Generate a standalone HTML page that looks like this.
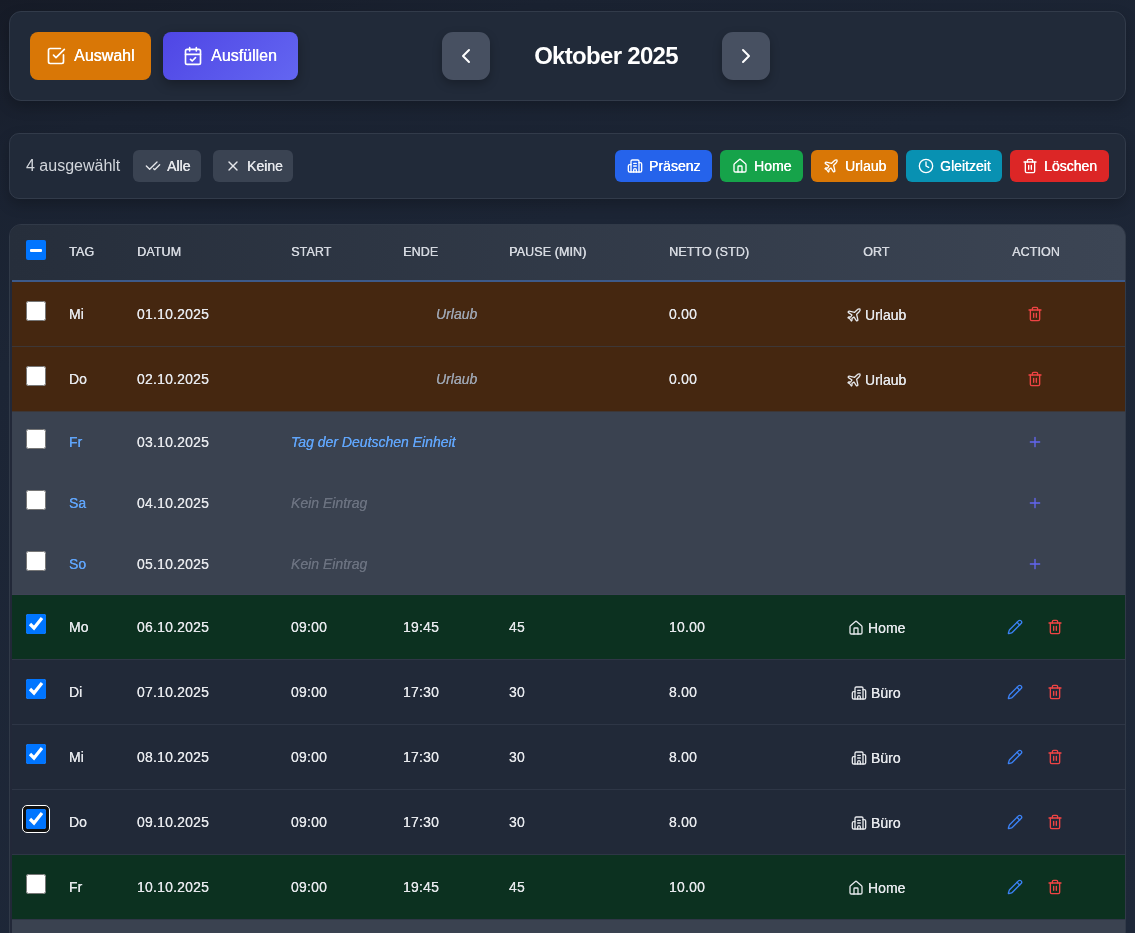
<!DOCTYPE html>
<html><head><meta charset="utf-8">
<style>
*{box-sizing:border-box;margin:0;padding:0}
html,body{width:1135px;height:933px;overflow:hidden}
body{font-family:"Liberation Sans",sans-serif;background:linear-gradient(165deg,#161b27 0%,#1a2231 12%,#1c2535 30%,#1e2839 100%);color:#e5e7eb;position:relative}
.card{position:absolute;will-change:transform;border:1px solid #323b4a;background:#212a39;border-radius:12px;box-shadow:0 6px 14px rgba(0,0,0,.22)}
.btn{position:absolute;display:flex;align-items:center;color:#fff;white-space:nowrap;text-shadow:0.35px 0 0 currentColor}
.btn svg{fill:none;stroke:currentColor;stroke-width:2;stroke-linecap:round;stroke-linejoin:round;flex:none}
.b1{left:20px;top:20px;width:121px;height:48px;border-radius:8px;background:#d97706;font-size:16px;padding-left:16px}
.b1 svg{width:20px;height:20px;margin-right:8px}
.b2{left:153px;top:20px;width:135px;height:48px;border-radius:8px;background:linear-gradient(135deg,#4f46e5,#6366f1);font-size:16px;padding-left:20px;box-shadow:0 4px 12px rgba(0,0,0,.3)}
.b2 svg{width:20px;height:20px;margin-right:8px}
.nav{position:absolute;top:20px;width:48px;height:48px;border-radius:11px;background:#475061;display:flex;align-items:center;justify-content:center;box-shadow:0 4px 10px rgba(0,0,0,.25)}
.nav svg{width:24px;height:24px;fill:none;stroke:#fff;stroke-width:2;stroke-linecap:round;stroke-linejoin:round}
.month{position:absolute;left:462px;top:20px;width:268px;height:48px;line-height:48px;text-align:center;font-size:24px;font-weight:bold;color:#fff;letter-spacing:-0.7px}
.sel{position:absolute;left:16px;top:16px;height:32px;line-height:32px;font-size:16px;color:#d1d5db}
.sb{position:absolute;top:16px;height:32px;border-radius:6px;font-size:14px;color:#e5e7eb;background:#3a4352;display:flex;align-items:center;padding-left:12px}
.sb svg{width:16px;height:16px;margin-right:6px}
.cb{top:16px;height:32px;border-radius:6px;font-size:14px;padding-left:12px}
.cb svg{width:16px;height:16px;margin-right:6px}
.tbl{position:absolute;will-change:transform;left:9px;top:224px;width:1117px;height:720px;border:1px solid #313a48;border-radius:12px;background:#222838;overflow:hidden}
.th{position:absolute;left:0;top:0;width:100%;height:55px;background:linear-gradient(90deg,#262e3b,#3c4554)}
.thl{position:absolute;left:2px;top:55px;width:1113px;height:2px;background:#3d5a8a}
.hc{position:absolute;top:0;line-height:55px;font-size:12.5px;font-weight:normal;color:#d5d9e0;letter-spacing:0.1px;text-shadow:0.4px 0 0 #d5d9e0}
.row{position:absolute;left:2px;width:1113px;border-bottom:1px solid rgba(55,65,81,.6)}
.c{position:absolute;font-size:14px;color:#e5e7eb;white-space:nowrap;text-shadow:0.1px 0 0 currentColor}
input[type=checkbox]{position:absolute;width:20px;height:20px;margin:0}
.it{font-style:italic}
.n{letter-spacing:0.2px}
.ind{position:absolute;width:20px;height:20px;background:#0075ff;border-radius:2px}
.ind:after{content:"";position:absolute;left:4px;top:8.5px;width:12px;height:3px;background:#fff;border-radius:1px}
.ic{position:absolute;fill:none;stroke:currentColor;stroke-width:2;stroke-linecap:round;stroke-linejoin:round}
</style></head><body>

<div class="card" style="left:9px;top:11px;width:1117px;height:90px">
  <div class="btn b1"><svg viewBox="0 0 24 24"><path d="m9 11 3 3L22 4"/><path d="M21 10.656V19a2 2 0 0 1-2 2H5a2 2 0 0 1-2-2V5a2 2 0 0 1 2-2h12.344"/></svg>Auswahl</div>
  <div class="btn b2"><svg viewBox="0 0 24 24"><rect x="3" y="4" width="18" height="18" rx="2"/><path d="M16 2v4M8 2v4M3 10h18"/><path d="m9 16 2 2 4-4"/></svg>Ausfüllen</div>
  <div class="nav" style="left:432px"><svg viewBox="0 0 24 24"><path d="m15 18-6-6 6-6"/></svg></div>
  <div class="month">Oktober 2025</div>
  <div class="nav" style="left:712px"><svg viewBox="0 0 24 24"><path d="m9 18 6-6-6-6"/></svg></div>
</div>

<div class="card" style="left:9px;top:133px;width:1117px;height:66px;border-radius:10px">
  <div class="sel">4 ausgewählt</div>
  <div class="btn sb" style="left:123px;width:68px"><svg viewBox="0 0 24 24"><path d="M18 6 7 17l-5-5"/><path d="m22 10-7.5 7.5L13 16"/></svg>Alle</div>
  <div class="btn sb" style="left:203px;width:80px"><svg viewBox="0 0 24 24"><path d="M18 6 6 18"/><path d="m6 6 12 12"/></svg>Keine</div>
  <div class="btn cb" style="left:605px;width:97px;background:#2563eb"><svg viewBox="0 0 24 24"><path d="M10 12h4"/><path d="M10 8h4"/><path d="M14 21v-3a2 2 0 0 0-4 0v3"/><path d="M6 10H4a2 2 0 0 0-2 2v7a2 2 0 0 0 2 2h16a2 2 0 0 0 2-2V9a2 2 0 0 0-2-2h-2"/><path d="M6 21V5a2 2 0 0 1 2-2h8a2 2 0 0 1 2 2v16"/></svg>Präsenz</div>
  <div class="btn cb" style="left:710px;width:83px;background:#16a34a"><svg viewBox="0 0 24 24"><path d="M15 21v-8a1 1 0 0 0-1-1h-4a1 1 0 0 0-1 1v8"/><path d="M3 10a2 2 0 0 1 .709-1.528l7-5.999a2 2 0 0 1 2.582 0l7 5.999A2 2 0 0 1 21 10v9a2 2 0 0 1-2 2H5a2 2 0 0 1-2-2z"/></svg>Home</div>
  <div class="btn cb" style="left:801px;width:87px;background:#d97706"><svg viewBox="0 0 24 24"><path d="M17.8 19.2 16 11l3.5-3.5C21 6 21.5 4 21 3c-1-.5-3 0-4.5 1.5L13 8 4.8 6.2c-.5-.1-.9.1-1.1.5l-.3.5c-.2.5-.1 1 .3 1.3L9 12l-2 3H4l-1 1 3 2 2 3 1-1v-3l3-2 3.5 5.3c.3.4.8.5 1.3.3l.5-.2c.4-.3.6-.7.5-1.2z"/></svg>Urlaub</div>
  <div class="btn cb" style="left:896px;width:96px;background:#0891b2"><svg viewBox="0 0 24 24"><circle cx="12" cy="12" r="10"/><path d="M12 6v6l4 2"/></svg>Gleitzeit</div>
  <div class="btn cb" style="left:1000px;width:99px;background:#dc2626"><svg viewBox="0 0 24 24"><path d="M3 6h18"/><path d="M19 6v14c0 1-1 2-2 2H7c-1 0-2-1-2-2V6"/><path d="M8 6V4c0-1 1-2 2-2h4c1 0 2 1 2 2v2"/><path d="M10 11v6M14 11v6"/></svg>Löschen</div>
</div>

<div class="tbl">
  <div class="th">
    <div class="ind" style="left:16px;top:15px"></div>
    <div class="hc" style="left:59px">TAG</div>
    <div class="hc" style="left:127px">DATUM</div>
    <div class="hc" style="left:281px">START</div>
    <div class="hc" style="left:393px">ENDE</div>
    <div class="hc" style="left:499px">PAUSE (MIN)</div>
    <div class="hc" style="left:659px">NETTO (STD)</div>
    <div class="hc" style="left:853px">ORT</div>
    <div class="hc" style="left:1002px">ACTION</div>
  </div>
  <div class="thl"></div>
<div class="row" style="top:57px;height:65px;background:#452710;border-bottom-color:#3d3737"><input type="checkbox" style="left:14px;top:19px"><div class="c" style="left:57px;top:24px;color:#e5e7eb">Mi</div><div class="c n" style="left:125px;top:24px">01.10.2025</div><div class="c it" style="left:424px;top:24px;color:#9ca3af">Urlaub</div><div class="c n" style="left:657px;top:24px">0.00</div><svg class="ic" viewBox="0 0 24 24" style="left:834px;top:25px;width:16px;height:16px;color:#e5e7eb;stroke-width:2"><path d="M17.8 19.2 16 11l3.5-3.5C21 6 21.5 4 21 3c-1-.5-3 0-4.5 1.5L13 8 4.8 6.2c-.5-.1-.9.1-1.1.5l-.3.5c-.2.5-.1 1 .3 1.3L9 12l-2 3H4l-1 1 3 2 2 3 1-1v-3l3-2 3.5 5.3c.3.4.8.5 1.3.3l.5-.2c.4-.3.6-.7.5-1.2z"/></svg><div class="c" style="left:853px;top:25px">Urlaub</div><svg class="ic" viewBox="0 0 24 24" style="left:1015px;top:24px;width:16px;height:16px;color:#ef4444;stroke-width:2"><path d="M3 6h18"/><path d="M19 6v14c0 1-1 2-2 2H7c-1 0-2-1-2-2V6"/><path d="M8 6V4c0-1 1-2 2-2h4c1 0 2 1 2 2v2"/><path d="M10 11v6M14 11v6"/></svg></div>
<div class="row" style="top:122px;height:65px;background:#452710;border-bottom-color:#3d3737"><input type="checkbox" style="left:14px;top:19px"><div class="c" style="left:57px;top:24px;color:#e5e7eb">Do</div><div class="c n" style="left:125px;top:24px">02.10.2025</div><div class="c it" style="left:424px;top:24px;color:#9ca3af">Urlaub</div><div class="c n" style="left:657px;top:24px">0.00</div><svg class="ic" viewBox="0 0 24 24" style="left:834px;top:25px;width:16px;height:16px;color:#e5e7eb;stroke-width:2"><path d="M17.8 19.2 16 11l3.5-3.5C21 6 21.5 4 21 3c-1-.5-3 0-4.5 1.5L13 8 4.8 6.2c-.5-.1-.9.1-1.1.5l-.3.5c-.2.5-.1 1 .3 1.3L9 12l-2 3H4l-1 1 3 2 2 3 1-1v-3l3-2 3.5 5.3c.3.4.8.5 1.3.3l.5-.2c.4-.3.6-.7.5-1.2z"/></svg><div class="c" style="left:853px;top:25px">Urlaub</div><svg class="ic" viewBox="0 0 24 24" style="left:1015px;top:24px;width:16px;height:16px;color:#ef4444;stroke-width:2"><path d="M3 6h18"/><path d="M19 6v14c0 1-1 2-2 2H7c-1 0-2-1-2-2V6"/><path d="M8 6V4c0-1 1-2 2-2h4c1 0 2 1 2 2v2"/><path d="M10 11v6M14 11v6"/></svg></div>
<div class="row" style="top:187px;height:61px;background:#3a4250;border-bottom-color:#3a4250"><input type="checkbox" style="left:14px;top:17px"><div class="c" style="left:57px;top:22px;color:#60a5fa">Fr</div><div class="c n" style="left:125px;top:22px">03.10.2025</div><div class="c it" style="left:279px;top:22px;color:#60a5fa">Tag der Deutschen Einheit</div><svg class="ic" viewBox="0 0 24 24" style="left:1015px;top:22px;width:16px;height:16px;color:#6366f1;stroke-width:2"><path d="M5 12h14M12 5v14"/></svg></div>
<div class="row" style="top:248px;height:61px;background:#3a4250;border-bottom-color:#3a4250"><input type="checkbox" style="left:14px;top:17px"><div class="c" style="left:57px;top:22px;color:#60a5fa">Sa</div><div class="c n" style="left:125px;top:22px">04.10.2025</div><div class="c it" style="left:279px;top:22px;color:#6b7280">Kein Eintrag</div><svg class="ic" viewBox="0 0 24 24" style="left:1015px;top:22px;width:16px;height:16px;color:#6366f1;stroke-width:2"><path d="M5 12h14M12 5v14"/></svg></div>
<div class="row" style="top:309px;height:61px;background:#3a4250;border-bottom-color:#3e4255"><input type="checkbox" style="left:14px;top:17px"><div class="c" style="left:57px;top:22px;color:#60a5fa">So</div><div class="c n" style="left:125px;top:22px">05.10.2025</div><div class="c it" style="left:279px;top:22px;color:#6b7280">Kein Eintrag</div><svg class="ic" viewBox="0 0 24 24" style="left:1015px;top:22px;width:16px;height:16px;color:#6366f1;stroke-width:2"><path d="M5 12h14M12 5v14"/></svg></div>
<div class="row" style="top:370px;height:65px;background:#0c3120;border-bottom-color:#303647"><input type="checkbox" checked style="left:14px;top:19px"><div class="c" style="left:57px;top:24px;color:#e5e7eb">Mo</div><div class="c n" style="left:125px;top:24px">06.10.2025</div><div class="c n" style="left:279px;top:24px">09:00</div><div class="c n" style="left:391px;top:24px">19:45</div><div class="c n" style="left:497px;top:24px">45</div><div class="c n" style="left:657px;top:24px">10.00</div><svg class="ic" viewBox="0 0 24 24" style="left:836px;top:25px;width:16px;height:16px;color:#e5e7eb;stroke-width:2"><path d="M15 21v-8a1 1 0 0 0-1-1h-4a1 1 0 0 0-1 1v8"/><path d="M3 10a2 2 0 0 1 .709-1.528l7-5.999a2 2 0 0 1 2.582 0l7 5.999A2 2 0 0 1 21 10v9a2 2 0 0 1-2 2H5a2 2 0 0 1-2-2z"/></svg><div class="c" style="left:856px;top:25px">Home</div><svg class="ic" viewBox="0 0 24 24" style="left:995px;top:24px;width:16px;height:16px;color:#3b82f6;stroke-width:2"><path d="M21.174 6.812a1 1 0 0 0-3.986-3.987L3.842 16.174a2 2 0 0 0-.5.83l-1.321 4.352a.5.5 0 0 0 .623.622l4.353-1.32a2 2 0 0 0 .83-.497z"/><path d="m15 5 4 4"/></svg><svg class="ic" viewBox="0 0 24 24" style="left:1035px;top:24px;width:16px;height:16px;color:#ef4444;stroke-width:2"><path d="M3 6h18"/><path d="M19 6v14c0 1-1 2-2 2H7c-1 0-2-1-2-2V6"/><path d="M8 6V4c0-1 1-2 2-2h4c1 0 2 1 2 2v2"/><path d="M10 11v6M14 11v6"/></svg></div>
<div class="row" style="top:435px;height:65px;background:#212938;border-bottom-color:#2e3646"><input type="checkbox" checked style="left:14px;top:19px"><div class="c" style="left:57px;top:24px;color:#e5e7eb">Di</div><div class="c n" style="left:125px;top:24px">07.10.2025</div><div class="c n" style="left:279px;top:24px">09:00</div><div class="c n" style="left:391px;top:24px">17:30</div><div class="c n" style="left:497px;top:24px">30</div><div class="c n" style="left:657px;top:24px">8.00</div><svg class="ic" viewBox="0 0 24 24" style="left:839px;top:25px;width:16px;height:16px;color:#e5e7eb;stroke-width:2"><path d="M10 12h4"/><path d="M10 8h4"/><path d="M14 21v-3a2 2 0 0 0-4 0v3"/><path d="M6 10H4a2 2 0 0 0-2 2v7a2 2 0 0 0 2 2h16a2 2 0 0 0 2-2V9a2 2 0 0 0-2-2h-2"/><path d="M6 21V5a2 2 0 0 1 2-2h8a2 2 0 0 1 2 2v16"/></svg><div class="c" style="left:859px;top:25px">Büro</div><svg class="ic" viewBox="0 0 24 24" style="left:995px;top:24px;width:16px;height:16px;color:#3b82f6;stroke-width:2"><path d="M21.174 6.812a1 1 0 0 0-3.986-3.987L3.842 16.174a2 2 0 0 0-.5.83l-1.321 4.352a.5.5 0 0 0 .623.622l4.353-1.32a2 2 0 0 0 .83-.497z"/><path d="m15 5 4 4"/></svg><svg class="ic" viewBox="0 0 24 24" style="left:1035px;top:24px;width:16px;height:16px;color:#ef4444;stroke-width:2"><path d="M3 6h18"/><path d="M19 6v14c0 1-1 2-2 2H7c-1 0-2-1-2-2V6"/><path d="M8 6V4c0-1 1-2 2-2h4c1 0 2 1 2 2v2"/><path d="M10 11v6M14 11v6"/></svg></div>
<div class="row" style="top:500px;height:65px;background:#212938;border-bottom-color:#2e3646"><input type="checkbox" checked style="left:14px;top:19px"><div class="c" style="left:57px;top:24px;color:#e5e7eb">Mi</div><div class="c n" style="left:125px;top:24px">08.10.2025</div><div class="c n" style="left:279px;top:24px">09:00</div><div class="c n" style="left:391px;top:24px">17:30</div><div class="c n" style="left:497px;top:24px">30</div><div class="c n" style="left:657px;top:24px">8.00</div><svg class="ic" viewBox="0 0 24 24" style="left:839px;top:25px;width:16px;height:16px;color:#e5e7eb;stroke-width:2"><path d="M10 12h4"/><path d="M10 8h4"/><path d="M14 21v-3a2 2 0 0 0-4 0v3"/><path d="M6 10H4a2 2 0 0 0-2 2v7a2 2 0 0 0 2 2h16a2 2 0 0 0 2-2V9a2 2 0 0 0-2-2h-2"/><path d="M6 21V5a2 2 0 0 1 2-2h8a2 2 0 0 1 2 2v16"/></svg><div class="c" style="left:859px;top:25px">Büro</div><svg class="ic" viewBox="0 0 24 24" style="left:995px;top:24px;width:16px;height:16px;color:#3b82f6;stroke-width:2"><path d="M21.174 6.812a1 1 0 0 0-3.986-3.987L3.842 16.174a2 2 0 0 0-.5.83l-1.321 4.352a.5.5 0 0 0 .623.622l4.353-1.32a2 2 0 0 0 .83-.497z"/><path d="m15 5 4 4"/></svg><svg class="ic" viewBox="0 0 24 24" style="left:1035px;top:24px;width:16px;height:16px;color:#ef4444;stroke-width:2"><path d="M3 6h18"/><path d="M19 6v14c0 1-1 2-2 2H7c-1 0-2-1-2-2V6"/><path d="M8 6V4c0-1 1-2 2-2h4c1 0 2 1 2 2v2"/><path d="M10 11v6M14 11v6"/></svg></div>
<div class="row" style="top:565px;height:65px;background:#212938;border-bottom-color:#2e3646"><div style="position:absolute;left:10px;top:15px;width:28px;height:28px;border:1px solid #fff;background:#101010;border-radius:5px"></div><input type="checkbox" checked style="left:14px;top:19px"><div class="c" style="left:57px;top:24px;color:#e5e7eb">Do</div><div class="c n" style="left:125px;top:24px">09.10.2025</div><div class="c n" style="left:279px;top:24px">09:00</div><div class="c n" style="left:391px;top:24px">17:30</div><div class="c n" style="left:497px;top:24px">30</div><div class="c n" style="left:657px;top:24px">8.00</div><svg class="ic" viewBox="0 0 24 24" style="left:839px;top:25px;width:16px;height:16px;color:#e5e7eb;stroke-width:2"><path d="M10 12h4"/><path d="M10 8h4"/><path d="M14 21v-3a2 2 0 0 0-4 0v3"/><path d="M6 10H4a2 2 0 0 0-2 2v7a2 2 0 0 0 2 2h16a2 2 0 0 0 2-2V9a2 2 0 0 0-2-2h-2"/><path d="M6 21V5a2 2 0 0 1 2-2h8a2 2 0 0 1 2 2v16"/></svg><div class="c" style="left:859px;top:25px">Büro</div><svg class="ic" viewBox="0 0 24 24" style="left:995px;top:24px;width:16px;height:16px;color:#3b82f6;stroke-width:2"><path d="M21.174 6.812a1 1 0 0 0-3.986-3.987L3.842 16.174a2 2 0 0 0-.5.83l-1.321 4.352a.5.5 0 0 0 .623.622l4.353-1.32a2 2 0 0 0 .83-.497z"/><path d="m15 5 4 4"/></svg><svg class="ic" viewBox="0 0 24 24" style="left:1035px;top:24px;width:16px;height:16px;color:#ef4444;stroke-width:2"><path d="M3 6h18"/><path d="M19 6v14c0 1-1 2-2 2H7c-1 0-2-1-2-2V6"/><path d="M8 6V4c0-1 1-2 2-2h4c1 0 2 1 2 2v2"/><path d="M10 11v6M14 11v6"/></svg></div>
<div class="row" style="top:630px;height:65px;background:#0c3120;border-bottom-color:#303647"><input type="checkbox" style="left:14px;top:19px"><div class="c" style="left:57px;top:24px;color:#e5e7eb">Fr</div><div class="c n" style="left:125px;top:24px">10.10.2025</div><div class="c n" style="left:279px;top:24px">09:00</div><div class="c n" style="left:391px;top:24px">19:45</div><div class="c n" style="left:497px;top:24px">45</div><div class="c n" style="left:657px;top:24px">10.00</div><svg class="ic" viewBox="0 0 24 24" style="left:836px;top:25px;width:16px;height:16px;color:#e5e7eb;stroke-width:2"><path d="M15 21v-8a1 1 0 0 0-1-1h-4a1 1 0 0 0-1 1v8"/><path d="M3 10a2 2 0 0 1 .709-1.528l7-5.999a2 2 0 0 1 2.582 0l7 5.999A2 2 0 0 1 21 10v9a2 2 0 0 1-2 2H5a2 2 0 0 1-2-2z"/></svg><div class="c" style="left:856px;top:25px">Home</div><svg class="ic" viewBox="0 0 24 24" style="left:995px;top:24px;width:16px;height:16px;color:#3b82f6;stroke-width:2"><path d="M21.174 6.812a1 1 0 0 0-3.986-3.987L3.842 16.174a2 2 0 0 0-.5.83l-1.321 4.352a.5.5 0 0 0 .623.622l4.353-1.32a2 2 0 0 0 .83-.497z"/><path d="m15 5 4 4"/></svg><svg class="ic" viewBox="0 0 24 24" style="left:1035px;top:24px;width:16px;height:16px;color:#ef4444;stroke-width:2"><path d="M3 6h18"/><path d="M19 6v14c0 1-1 2-2 2H7c-1 0-2-1-2-2V6"/><path d="M8 6V4c0-1 1-2 2-2h4c1 0 2 1 2 2v2"/><path d="M10 11v6M14 11v6"/></svg></div>
<div class="row" style="top:695px;height:61px;background:#3a4250;border-bottom-color:#3a4250"><input type="checkbox" style="left:14px;top:17px"><div class="c" style="left:57px;top:22px;color:#60a5fa">Sa</div><div class="c n" style="left:125px;top:22px">11.10.2025</div><div class="c it" style="left:279px;top:22px;color:#6b7280">Kein Eintrag</div><svg class="ic" viewBox="0 0 24 24" style="left:1015px;top:22px;width:16px;height:16px;color:#6366f1;stroke-width:2"><path d="M5 12h14M12 5v14"/></svg></div>
</div>
</body></html>
